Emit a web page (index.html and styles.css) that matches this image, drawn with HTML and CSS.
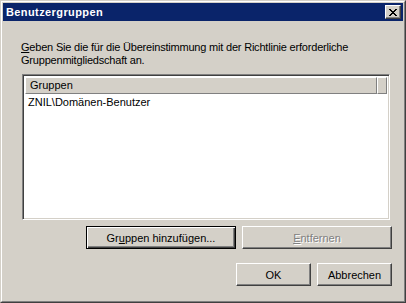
FILE: index.html
```html
<!DOCTYPE html>
<html lang="de">
<head>
    <meta charset="UTF-8">
    <title>Benutzergruppen</title>
    <link rel="stylesheet" href="styles.css">
</head>
<body>
    <div class="window">
        <div class="frame">
            <div class="titlebar">
                <span class="title">Benutzergruppen</span>
                <button class="close" type="button" aria-label="Schließen">
                    <svg width="8" height="7" viewBox="0 0 8 7" shape-rendering="crispEdges">
                        <rect x="0" y="0" width="2" height="1"/><rect x="6" y="0" width="2" height="1"/>
                        <rect x="1" y="1" width="2" height="1"/><rect x="5" y="1" width="2" height="1"/>
                        <rect x="2" y="2" width="4" height="1"/>
                        <rect x="3" y="3" width="2" height="1"/>
                        <rect x="2" y="4" width="4" height="1"/>
                        <rect x="1" y="5" width="2" height="1"/><rect x="5" y="5" width="2" height="1"/>
                        <rect x="0" y="6" width="2" height="1"/><rect x="6" y="6" width="2" height="1"/>
                    </svg>
                </button>
            </div>

            <div class="content">
                <p class="desc"><span class="key">G</span>eben Sie die für die Übereinstimmung mit der Richtlinie erforderliche<br>Gruppenmitgliedschaft an.</p>

                <div class="listview">
                    <div class="header">
                        <div class="col">Gruppen</div>
                        <div class="col filler"></div>
                    </div>
                    <div class="item">ZNIL\Domänen-Benutzer</div>
                </div>

                <div class="buttons row1">
                    <button type="button" class="btn wide default">Gr<span class="key">u</span>ppen hinzufügen...</button>
                    <button type="button" class="btn wide" disabled><span class="key">E</span>ntfernen</button>
                </div>
                <div class="buttons row2">
                    <button type="button" class="btn">OK</button>
                    <button type="button" class="btn">Abbrechen</button>
                </div>
            </div>
        </div>
    </div>
</body>
</html>
```

FILE: styles.css
```css
body {
    margin: 0;
    background: #d4d0c8;
    font-family: "Liberation Sans", Arial, sans-serif;
    font-size: 11px;
    color: #000;
}

/* outer window frame */
.window {
    width: 406px;
    height: 303px;
    box-sizing: border-box;
    border: 1px solid;
    border-color: #d4d0c8 #404040 #404040 #d4d0c8;
    background: #d4d0c8;
}

.frame {
    height: 100%;
    box-sizing: border-box;
    border: 1px solid;
    border-color: #fff #808080 #808080 #fff;
    padding: 1px;
}

/* title bar */
.titlebar {
    height: 18px;
    background: #0a246a;
    display: flex;
    align-items: center;
    justify-content: space-between;
    padding: 0 2px 0 3px;
}

.title {
    color: #fff;
    font-weight: bold;
    font-size: 11px;
    letter-spacing: 0.4px;
}

.close {
    width: 16px;
    height: 14px;
    padding: 0;
    margin: 0;
    background: #d4d0c8;
    border: 1px solid;
    border-color: #fff #404040 #404040 #fff;
    box-shadow: inset -1px -1px #808080;
    display: flex;
    align-items: center;
    justify-content: center;
}

.close svg {
    fill: #000;
    display: block;
}

/* access key letters */
.key {
    text-decoration: underline;
}

/* dialog body */
.content {
    padding: 20px 11px 0 18px;
}

.desc {
    margin: 0;
    line-height: 13px;
    white-space: nowrap;
    letter-spacing: -0.2px;
}

/* list view */
.listview {
    margin: 7px 2px 0 1px;
    height: 146px;
    box-sizing: border-box;
    border: 1px solid;
    border-color: #808080 #fff #fff #808080;
    box-shadow: inset 1px 1px #404040, inset -1px -1px #d4d0c8;
    background: #fff;
    padding: 2px 2px 0 2px;
}

.header {
    display: flex;
    height: 17px;
}

.col {
    box-sizing: border-box;
    height: 17px;
    width: 352px;
    background: #d4d0c8;
    border-top: 1px solid #fff;
    border-left: 1px solid #fff;
    border-right: 1px solid #808080;
    border-bottom: 1px solid #808080;
    padding-left: 4px;
    line-height: 15px;
}

.col.filler {
    flex: 1;
}

.item {
    padding: 2px 0 0 3px;
    line-height: 13px;
}

/* buttons */
.buttons {
    display: flex;
    justify-content: flex-end;
    gap: 6px;
}

.row1 {
    margin-top: 6px;
}

.row2 {
    margin-top: 14px;
}

.btn {
    width: 75px;
    height: 23px;
    box-sizing: border-box;
    margin: 0;
    padding: 0;
    font-family: "Liberation Sans", Arial, sans-serif;
    font-size: 11px;
    color: #000;
    background: #d4d0c8;
    border: 1px solid;
    border-color: #fff #404040 #404040 #fff;
    box-shadow: inset -1px -1px #808080;
}

.btn.wide {
    width: 150px;
}

.btn.default {
    border: 1px solid #000;
    box-shadow: inset 1px 1px #fff, inset -1px -1px #404040, inset -2px -2px #808080;
}

.btn:disabled {
    color: #808080;
    text-shadow: 1px 1px #fff;
}
```
